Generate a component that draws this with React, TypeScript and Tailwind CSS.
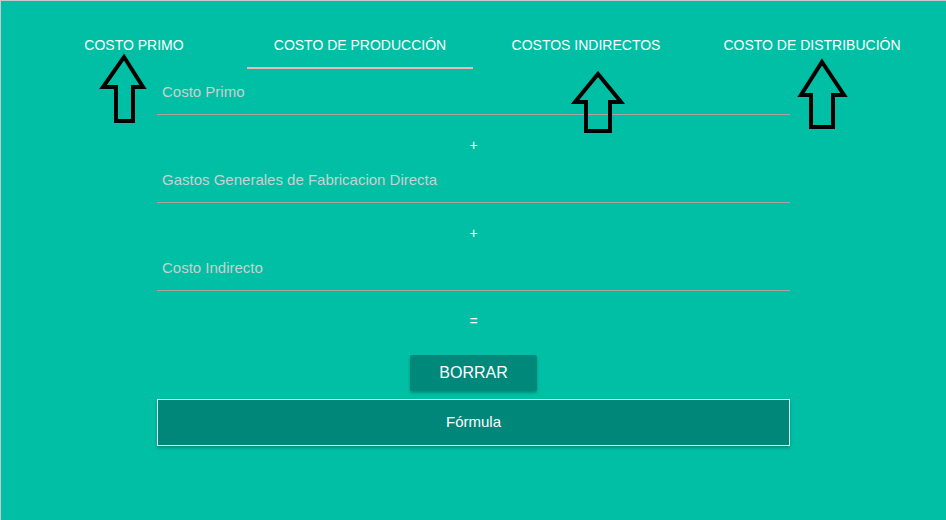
import React from "react";

const tabs = ["COSTO PRIMO", "COSTO DE PRODUCCIÓN", "COSTOS INDIRECTOS", "COSTO DE DISTRIBUCIÓN"];

// centerlines of the hand-drawn arrows: [tipX, tipY, headL, headR, shaftL, shaftR, baseY, bottomY]
const arrows = [
  [124, 57, 103, 143, 116, 133, 87, 121],
  [598, 74, 575, 621, 586, 610, 102, 131],
  [822, 62, 801, 844, 811, 833, 95, 127],
];

function Field({ label, first }: { label: string; first?: boolean }) {
  return (
    <div className={`${first ? "pt-[13px]" : "pt-[15px]"} pb-[12px] border-b border-[#a8a2a6] px-[5px]`}>
      <span className="block text-[15px] leading-[20px] text-[#c8d2ce]">{label}</span>
    </div>
  );
}

function Operator({ sign }: { sign: string }) {
  return <div className="mt-5 text-center text-[14px] leading-[20px] text-white">{sign}</div>;
}

export default function App() {
  return (
    <div className="relative min-h-[520px] bg-[#00bfa5] border-t border-l border-[#c9c9c9] font-['Liberation_Sans',Arial,sans-serif]">
      <div className="ml-[20px] mt-[20px] flex h-12 w-[904px]">
        {tabs.map((t, i) => (
          <div key={t} className="relative flex flex-1 items-center justify-center text-[14px] text-white">
            {t}
            {i === 1 && <span className="absolute bottom-0 left-0 right-0 h-[2px] bg-[#f6b2b5]" />}
          </div>
        ))}
      </div>

      <div className="mx-auto w-[633px]">
        <Field label="Costo Primo" first />
        <Operator sign="+" />
        <Field label="Gastos Generales de Fabricacion Directa" />
        <Operator sign="+" />
        <Field label="Costo Indirecto" />
        <Operator sign="=" />

        <div className="mt-6 flex justify-center">
          <button className="h-9 w-[127px] rounded-[2px] bg-[#00897b] text-[16px] text-white shadow-[0_2px_3px_rgba(0,0,0,0.25)]">
            BORRAR
          </button>
        </div>
        <div className="mt-2 flex h-[47px] items-center justify-center border border-[#e0f2f1] bg-[#00877a] text-[15px] text-white shadow-[0_2px_3px_rgba(0,0,0,0.25)]">
          Fórmula
        </div>
      </div>

      <svg className="pointer-events-none absolute left-[-1px] top-[-1px]" width="946" height="520">
        {arrows.map(([tx, ty, hl, hr, sl, sr, by, bb], i) => (
          <polygon
            key={i}
            points={`${tx},${ty} ${hr},${by} ${sr},${by} ${sr},${bb} ${sl},${bb} ${sl},${by} ${hl},${by}`}
            fill="none"
            stroke="#000"
            strokeWidth="4"
            strokeLinejoin="miter"
          />
        ))}
      </svg>
    </div>
  );
}
